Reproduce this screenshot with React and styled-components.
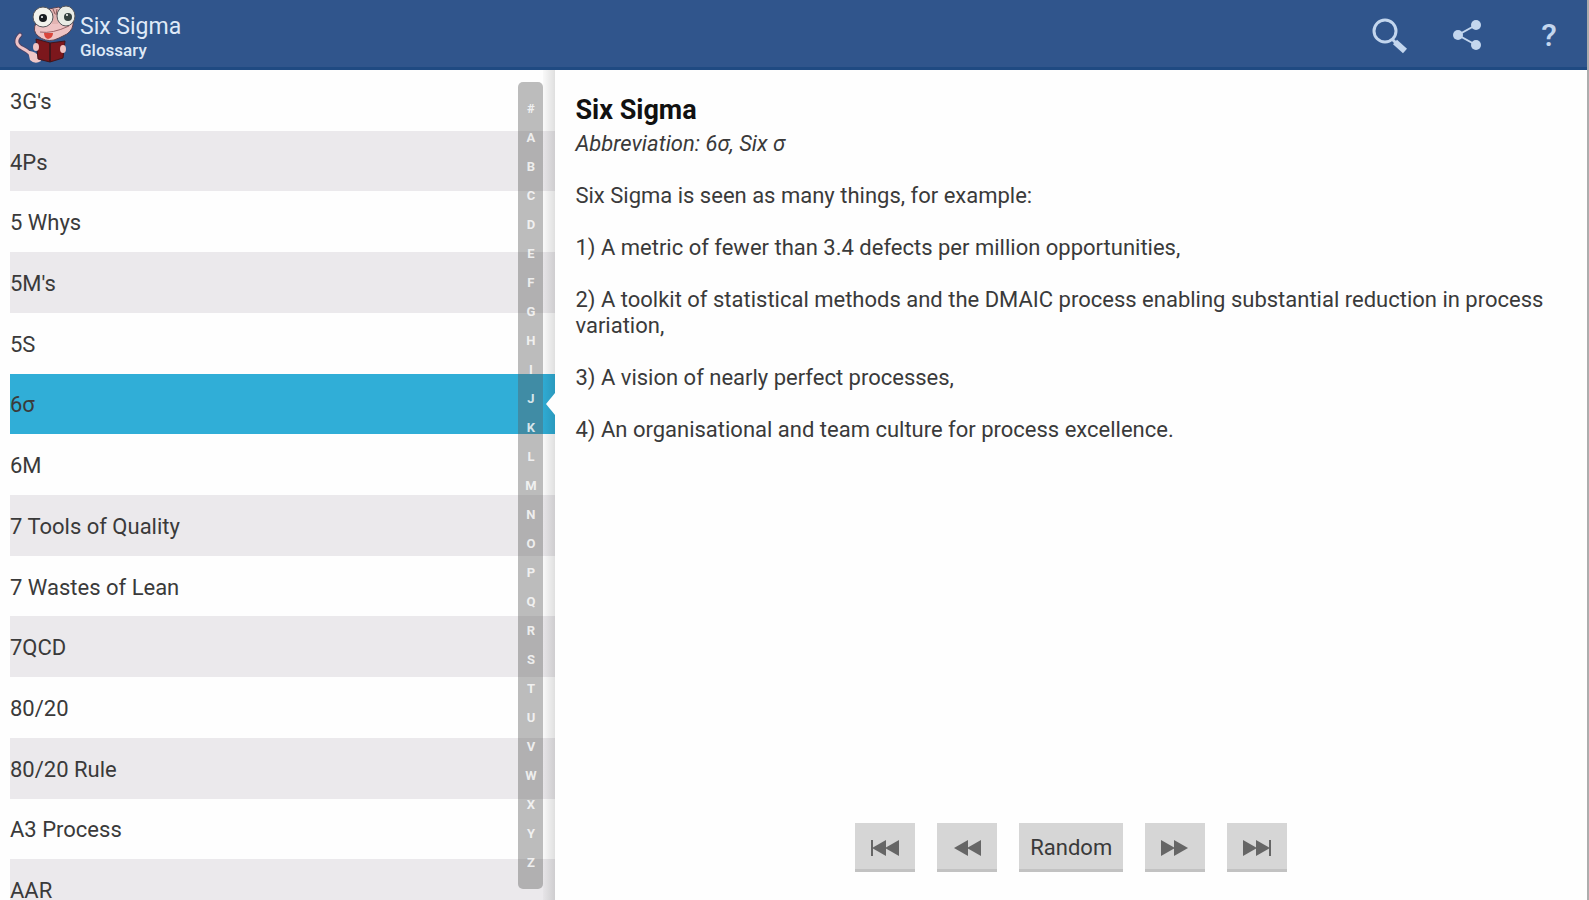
import { useState } from "react";
import styled, { createGlobalStyle } from "styled-components";

const color = {
  bar: "#30558c",
  barEdge: "#1f4a82",
  barIcon: "#c3d6ee",
  selected: "#30aed7",
  stripe: "#ebe9ec",
  text: "#3a3a3a",
  button: "#d6d6d6",
  glyph: "#666666",
};

const terms = [
  "3G's",
  "4Ps",
  "5 Whys",
  "5M's",
  "5S",
  "6σ",
  "6M",
  "7 Tools of Quality",
  "7 Wastes of Lean",
  "7QCD",
  "80/20",
  "80/20 Rule",
  "A3 Process",
  "AAR",
];

const letters = "#ABCDEFGHIJKLMNOPQRSTUVWXYZ".split("");

const paragraphs = [
  "Six Sigma is seen as many things, for example:",
  "1) A metric of fewer than 3.4 defects per million opportunities,",
  "2) A toolkit of statistical methods and the DMAIC process enabling substantial reduction in process variation,",
  "3) A vision of nearly perfect processes,",
  "4) An organisational and team culture for process excellence.",
];

function Mascot() {
  return (
    <svg width="66" height="66" viewBox="0 0 66 66" aria-hidden="true">
      {/* tail */}
      <path
        d="M8 34C3 39 4 44 10 47C17 50 20 55 25 58"
        fill="none"
        stroke="#4a4468"
        strokeWidth="5"
        strokeLinecap="round"
      />
      <path
        d="M8 34C3 39 4 44 10 47C17 50 20 55 25 58"
        fill="none"
        stroke="#eec3c6"
        strokeWidth="3"
        strokeLinecap="round"
      />
      <path d="M16 50Q22 49 28 56L29 60Q23 64 18 59Z" fill="#f0c8c8" />
      {/* head */}
      <path
        d="M37 8L47 6L52 12L61 20Q62 28 55 33L47 37L42 39Q33 41 26 35Q20 30 24 22Z"
        fill="#eec3c4"
        stroke="#5b4350"
        strokeWidth="1"
      />
      <path d="M38 9Q43 6 48 10L46 23H40Z" fill="#e3b3b2" />
      <path d="M41 8L43 13M45 8L44 14" stroke="#8d5a5c" strokeWidth="1" />
      <path d="M28 31Q40 33 57 25" fill="none" stroke="#9b6468" strokeWidth="1" />
      <path d="M32 32L41 32Q41 37 36 38Q32 37 32 32" fill="#d9463c" />
      {/* eyes */}
      <ellipse cx="31" cy="16" rx="10" ry="10" fill="#f2f2ec" stroke="#55555a" strokeWidth="1" />
      <ellipse cx="54" cy="15" rx="9" ry="10" fill="#e9ece6" stroke="#55555a" strokeWidth="1" />
      <circle cx="31" cy="17" r="4" fill="#191c20" />
      <circle cx="56" cy="16" r="4" fill="#34413f" />
      <circle cx="30" cy="16" r="1" fill="#fff" />
      <circle cx="55" cy="14" r="1" fill="#fff" />
      {/* book */}
      <path d="M24 38L38 42L53 40L51 57L38 61L26 58Z" fill="#7c171c" stroke="#42151b" strokeWidth="1" />
      <path d="M38 42V61" stroke="#42151b" strokeWidth="2" />
      <ellipse cx="24" cy="46" rx="3" ry="4" fill="#efc3c3" />
      <ellipse cx="51" cy="48" rx="3" ry="4" fill="#efc3c3" />
    </svg>
  );
}

function SearchIcon() {
  return (
    <svg width="40" height="40" viewBox="0 0 40 40" aria-hidden="true">
      <circle cx="16" cy="16" r="11" fill="none" stroke={color.barIcon} strokeWidth="3" />
      <path d="M23 24L27 28" stroke={color.barIcon} strokeWidth="3" />
      <path d="M26 27L36 36" stroke={color.barIcon} strokeWidth="6" />
    </svg>
  );
}

function ShareIcon() {
  return (
    <svg width="40" height="40" viewBox="0 0 40 40" aria-hidden="true">
      <path d="M27 10L9 20L27 30" fill="none" stroke={color.barIcon} strokeWidth="2" />
      <g fill={color.barIcon}>
        <circle cx="27" cy="10" r="5" />
        <circle cx="9" cy="20" r="5" />
        <circle cx="27" cy="30" r="5" />
      </g>
    </svg>
  );
}

function SkipIcon({ flip, end }) {
  return (
    <SkipSvg width="30" height="18" viewBox="0 0 30 18" $flip={flip} aria-hidden="true">
      <path d="M16 1V17L2 9ZM29 1V17L15 9Z" />
      {end && <path d="M1 1H3V17H1Z" />}
    </SkipSvg>
  );
}

export default function App() {
  const [current, setCurrent] = useState("6σ");

  return (
    <>
      <GlobalStyle />
      <Page>
        <TopBar>
          <Mascot />
          <Brand>
            <AppName>Six Sigma</AppName>
            <AppSub>Glossary</AppSub>
          </Brand>
          <Actions>
            <ActionButton aria-label="Search"><SearchIcon /></ActionButton>
            <ActionButton aria-label="Share"><ShareIcon /></ActionButton>
            <ActionButton aria-label="Help">?</ActionButton>
          </Actions>
        </TopBar>

        <Panes>
          <Sidebar>
            <TermList>
              {terms.map((term) => (
                <li key={term}>
                  <TermButton $active={term === current} onClick={() => setCurrent(term)}>
                    {term}
                  </TermButton>
                </li>
              ))}
            </TermList>
            <EdgeShade />
            <LetterIndex>
              {letters.map((l) => (
                <Letter key={l}>{l}</Letter>
              ))}
            </LetterIndex>
          </Sidebar>

          <Detail>
            <Title>Six Sigma</Title>
            <Abbreviation>Abbreviation: 6σ, Six σ</Abbreviation>
            {paragraphs.map((p) => (
              <Paragraph key={p}>{p}</Paragraph>
            ))}
            <Pager>
              <PagerButton aria-label="First"><SkipIcon end /></PagerButton>
              <PagerButton aria-label="Previous"><SkipIcon /></PagerButton>
              <PagerButton $wide>Random</PagerButton>
              <PagerButton aria-label="Next"><SkipIcon flip /></PagerButton>
              <PagerButton aria-label="Last"><SkipIcon flip end /></PagerButton>
            </Pager>
          </Detail>
        </Panes>
      </Page>
    </>
  );
}

/* ========================= styled ========================= */

const GlobalStyle = createGlobalStyle`
  * { box-sizing: border-box; }

  body {
    margin: 0;
    background: #fefefe;
    color: ${color.text};
    font-family: Roboto, "Noto Sans", sans-serif;
    font-size: 22px;
    line-height: 26px;
  }

  button {
    border: 0;
    padding: 0;
    background: none;
    color: inherit;
    font: inherit;
    cursor: pointer;
  }
`;

const Page = styled.div`
  display: flex;
  flex-direction: column;
  height: 100vh;
  overflow: hidden;
  border-right: 2px solid #adadad;
`;

const TopBar = styled.header`
  display: flex;
  flex: none;
  align-items: center;
  height: 70px;
  padding: 0 18px 0 12px;
  background: ${color.bar};
  border-bottom: 3px solid ${color.barEdge};
`;

const Brand = styled.div`
  flex: 1;
  padding: 6px 2px 0;
  color: #dfe9f7;
`;

const AppName = styled.h1`
  margin: 0;
  font-size: 23px;
  font-weight: 400;
  line-height: 26px;
`;

const AppSub = styled.div`
  font-size: 17px;
  font-weight: 500;
  line-height: 20px;
`;

const Actions = styled.div`
  display: flex;
  gap: 40px;
`;

const ActionButton = styled.button`
  display: flex;
  align-items: center;
  justify-content: center;
  width: 40px;
  height: 40px;
  padding-top: 2px;
  color: ${color.barIcon};
  font-size: 32px;
  font-weight: 500;
`;

const Panes = styled.main`
  display: flex;
  flex: 1;
  min-height: 0;
`;

const Sidebar = styled.nav`
  position: relative;
  flex: 0 0 35%;
  overflow: hidden;
`;

/* rows share the height, the last one runs past the bottom edge */
const TermList = styled.ul`
  display: grid;
  grid-auto-rows: 1fr;
  height: calc(100% + 20px);
  margin: 0;
  padding: 0 0 0 10px;
  list-style: none;

  li:nth-child(even) {
    background: ${color.stripe};
  }
`;

const TermButton = styled.button`
  position: relative;
  display: block;
  width: 100%;
  height: 100%;
  padding-top: 3px;
  text-align: left;
  background: ${({ $active }) => ($active ? color.selected : "transparent")};

  /* notch pointing at the open entry */
  &::after {
    content: "";
    display: ${({ $active }) => ($active ? "block" : "none")};
    position: absolute;
    z-index: 1;
    top: 19px;
    right: 0;
    border: 11px solid transparent;
    border-left-width: 0;
    border-right: 9px solid #fefefe;
  }
`;

const EdgeShade = styled.div`
  position: absolute;
  top: 0;
  right: 0;
  bottom: 0;
  width: 12px;
  background: linear-gradient(to right, rgba(0, 0, 0, 0.02), rgba(0, 0, 0, 0.12));
  pointer-events: none;
`;

const LetterIndex = styled.div`
  position: absolute;
  top: 12px;
  right: 12px;
  bottom: 11px;
  display: flex;
  flex-direction: column;
  width: 25px;
  padding: 12px 0;
  border-radius: 5px;
  background: rgba(90, 90, 90, 0.4);
`;

const Letter = styled.button`
  flex: 1;
  min-height: 0;
  color: rgba(255, 255, 255, 0.8);
  font-size: 13px;
  font-weight: 700;
  line-height: 14px;
`;

const Detail = styled.article`
  display: flex;
  flex: 1;
  flex-direction: column;
  padding: 25px 20px 28px;
`;

const Title = styled.h2`
  margin: 0 0 6px;
  color: #111;
  font-size: 27px;
  font-weight: 700;
  line-height: 30px;
`;

const Abbreviation = styled.p`
  margin: 0;
  font-style: italic;
`;

const Paragraph = styled.p`
  margin: 26px 0 0;
`;

const Pager = styled.div`
  display: flex;
  justify-content: center;
  gap: 22px;
  margin-top: auto;
`;

const PagerButton = styled.button`
  display: flex;
  align-items: center;
  justify-content: center;
  width: ${({ $wide }) => ($wide ? "104px" : "60px")};
  height: 49px;
  background: ${color.button};
  box-shadow: inset 0 -3px 0 #c2c2c2;
`;

const SkipSvg = styled.svg`
  fill: ${color.glyph};
  transform: ${({ $flip }) => ($flip ? "scaleX(-1)" : "none")};
`;
